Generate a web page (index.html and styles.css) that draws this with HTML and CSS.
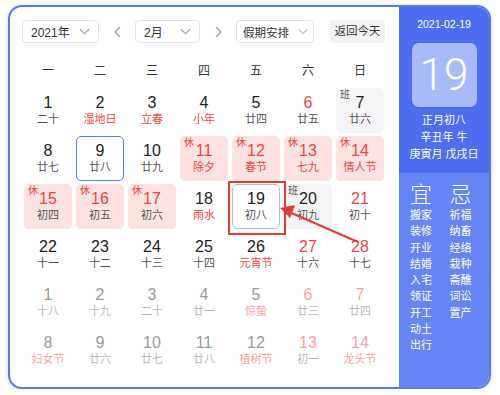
FILE: index.html
```html
<!DOCTYPE html>
<html lang="zh-CN">
<head>
<meta charset="utf-8">
<title>万年历</title>
<link rel="stylesheet" href="styles.css">
</head>
<body>
<div class="card">
  <div class="cal">
    <div class="toolbar">
      <div class="select sel-year"><span>2021年</span><svg class="chev" viewBox="0 0 12 7"><polyline points="1,1 6,6 11,1"/></svg></div>
      <div class="nav"><svg viewBox="0 0 7 12"><polyline points="6,1 1,6 6,11"/></svg></div>
      <div class="select sel-month"><span>2月</span><svg class="chev" viewBox="0 0 12 7"><polyline points="1,1 6,6 11,1"/></svg></div>
      <div class="nav"><svg viewBox="0 0 7 12"><polyline points="1,1 6,6 1,11"/></svg></div>
      <div class="select sel-holiday"><span>假期安排</span><svg class="chev" viewBox="0 0 12 7"><polyline points="1,1 6,6 11,1"/></svg></div>
      <div class="today-btn">返回今天</div>
    </div>
    <div class="weekdays">
      <span>一</span><span>二</span><span>三</span><span>四</span><span>五</span><span>六</span><span>日</span>
    </div>
    <div class="grid">
      <div class="cell"><div class="num">1</div><div class="lunar">二十</div></div>
      <div class="cell"><div class="num">2</div><div class="lunar red">湿地日</div></div>
      <div class="cell"><div class="num">3</div><div class="lunar red">立春</div></div>
      <div class="cell"><div class="num">4</div><div class="lunar red">小年</div></div>
      <div class="cell"><div class="num">5</div><div class="lunar">廿四</div></div>
      <div class="cell"><div class="num red">6</div><div class="lunar">廿五</div></div>
      <div class="cell work"><span class="tag">班</span><div class="num">7</div><div class="lunar">廿六</div></div>

      <div class="cell"><div class="num">8</div><div class="lunar">廿七</div></div>
      <div class="cell today"><div class="num">9</div><div class="lunar">廿八</div></div>
      <div class="cell"><div class="num">10</div><div class="lunar">廿九</div></div>
      <div class="cell rest"><span class="tag">休</span><div class="num red">11</div><div class="lunar red">除夕</div></div>
      <div class="cell rest"><span class="tag">休</span><div class="num red">12</div><div class="lunar red">春节</div></div>
      <div class="cell rest"><span class="tag">休</span><div class="num red">13</div><div class="lunar red">七九</div></div>
      <div class="cell rest"><span class="tag">休</span><div class="num red">14</div><div class="lunar red">情人节</div></div>

      <div class="cell rest"><span class="tag">休</span><div class="num red">15</div><div class="lunar">初四</div></div>
      <div class="cell rest"><span class="tag">休</span><div class="num red">16</div><div class="lunar">初五</div></div>
      <div class="cell rest"><span class="tag">休</span><div class="num red">17</div><div class="lunar">初六</div></div>
      <div class="cell"><div class="num">18</div><div class="lunar red">雨水</div></div>
      <div class="cell selected"><div class="num">19</div><div class="lunar">初八</div></div>
      <div class="cell work"><span class="tag">班</span><div class="num">20</div><div class="lunar">初九</div></div>
      <div class="cell"><div class="num red">21</div><div class="lunar">初十</div></div>

      <div class="cell"><div class="num">22</div><div class="lunar">十一</div></div>
      <div class="cell"><div class="num">23</div><div class="lunar">十二</div></div>
      <div class="cell"><div class="num">24</div><div class="lunar">十三</div></div>
      <div class="cell"><div class="num">25</div><div class="lunar">十四</div></div>
      <div class="cell"><div class="num">26</div><div class="lunar red">元宵节</div></div>
      <div class="cell"><div class="num red">27</div><div class="lunar">十六</div></div>
      <div class="cell"><div class="num red">28</div><div class="lunar">十七</div></div>

      <div class="cell other"><div class="num">1</div><div class="lunar">十八</div></div>
      <div class="cell other"><div class="num">2</div><div class="lunar">十九</div></div>
      <div class="cell other"><div class="num">3</div><div class="lunar">二十</div></div>
      <div class="cell other"><div class="num">4</div><div class="lunar">廿一</div></div>
      <div class="cell other"><div class="num">5</div><div class="lunar red">惊蛰</div></div>
      <div class="cell other"><div class="num red">6</div><div class="lunar">廿三</div></div>
      <div class="cell other"><div class="num red">7</div><div class="lunar">廿四</div></div>

      <div class="cell other"><div class="num">8</div><div class="lunar red">妇女节</div></div>
      <div class="cell other"><div class="num">9</div><div class="lunar">廿六</div></div>
      <div class="cell other"><div class="num">10</div><div class="lunar">廿七</div></div>
      <div class="cell other"><div class="num">11</div><div class="lunar">廿八</div></div>
      <div class="cell other"><div class="num">12</div><div class="lunar red">植树节</div></div>
      <div class="cell other"><div class="num red">13</div><div class="lunar">初一</div></div>
      <div class="cell other"><div class="num red">14</div><div class="lunar red">龙头节</div></div>
    </div>
  </div>

  <div class="side">
    <div class="side-top">
      <div class="side-date">2021-02-19</div>
      <div class="big-day">19</div>
      <div class="side-line">正月初八</div>
      <div class="side-line">辛丑年 牛</div>
      <div class="side-line">庚寅月 戊戌日</div>
    </div>
    <div class="side-bottom">
      <div class="yiji">
        <div class="yiji-title">宜</div>
        <div class="yiji-item">搬家</div>
        <div class="yiji-item">装修</div>
        <div class="yiji-item">开业</div>
        <div class="yiji-item">结婚</div>
        <div class="yiji-item">入宅</div>
        <div class="yiji-item">领证</div>
        <div class="yiji-item">开工</div>
        <div class="yiji-item">动土</div>
        <div class="yiji-item">出行</div>
      </div>
      <div class="yiji">
        <div class="yiji-title">忌</div>
        <div class="yiji-item">祈福</div>
        <div class="yiji-item">纳畜</div>
        <div class="yiji-item">经络</div>
        <div class="yiji-item">栽种</div>
        <div class="yiji-item">斋醮</div>
        <div class="yiji-item">词讼</div>
        <div class="yiji-item">置产</div>
      </div>
    </div>
  </div>

  <div class="mark"></div>
  <svg class="arrow" viewBox="0 0 479 380" width="479" height="380">
    <line x1="348" y1="235" x2="277" y2="204"/>
    <polygon points="270,201 285,198 280,211"/>
  </svg>
</div>
</body>
</html>
```

FILE: styles.css
```css
* { box-sizing: border-box; }

body {
  margin: 0;
  background: #ffffff;
  font-family: "Liberation Sans", "Noto Sans CJK SC", sans-serif;
  color: #222;
}

.card {
  position: relative;
  margin: 5px 0 0 8px;
  width: 483px;
  height: 384px;
  border: 2px solid #5b79ef;
  border-radius: 14px;
  overflow: hidden;
  display: flex;
  background: #fff;
  box-shadow: 0 1px 4px rgba(80, 100, 200, 0.25);
}

.cal {
  width: 389px;
  padding: 13px 0 0 12px;
}

.toolbar {
  display: flex;
  align-items: center;
  height: 23px;
  font-size: 12px;
  color: #333;
}

.select {
  height: 23px;
  border: 1px solid #e4e4e4;
  border-radius: 4px;
  display: flex;
  align-items: center;
  justify-content: space-between;
  padding: 0 8px 0 8px;
}

.sel-year { width: 77px; }
.sel-month { width: 65px; }
.sel-holiday { width: 78px; padding: 0 5px 0 6px; }
.sel-holiday span { font-size: 11.5px; }
.sel-holiday .chev { width: 10px; }

.chev {
  width: 11px;
  height: 7px;
  fill: none;
  stroke: #999;
  stroke-width: 1.2;
}

.nav {
  width: 36px;
  display: flex;
  justify-content: center;
}

.nav svg {
  width: 7px;
  height: 12px;
  fill: none;
  stroke: #999;
  stroke-width: 1.3;
}

.today-btn {
  margin-left: 16px;
  width: 55px;
  height: 23px;
  line-height: 23px;
  text-align: center;
  background: #f3f3f3;
  border-radius: 4px;
  font-size: 11.5px;
  color: #333;
}

.weekdays {
  display: grid;
  grid-template-columns: repeat(7, 48px);
  column-gap: 4px;
  margin-left: 2px;
  padding-top: 18px;
  height: 45px;
  font-size: 12px;
  line-height: 20px;
  color: #333;
  text-align: center;
}

.grid {
  display: grid;
  grid-template-columns: repeat(7, 48px);
  grid-auto-rows: 45px;
  column-gap: 4px;
  row-gap: 3px;
  margin-left: 2px;
}

.cell {
  position: relative;
  border-radius: 5px;
  text-align: center;
  padding-top: 6px;
}

.num {
  font-size: 16px;
  line-height: 18px;
  color: #222;
}

.lunar {
  font-size: 11px;
  line-height: 15px;
  color: #555;
}

.num.red { color: #ef4444; }
.lunar.red { color: #ef4444; }

.rest { background: #fde2e2; }
.work { background: #f4f4f6; }

.tag {
  position: absolute;
  top: 1px;
  left: 4px;
  font-size: 10px;
  line-height: 12px;
  color: #ef4444;
}

.work .tag { color: #555; }

.today {
  border: 1.5px solid #5b79ef;
  padding-top: 4.5px;
}

.selected {
  border: 1.5px solid #bdbdbd;
  padding-top: 4.5px;
}

.other .num { color: #9a9a9a; }
.other .lunar { color: #b8b8b8; }
.other .num.red, .other .lunar.red { color: #f5a3a3; }

.side {
  width: 90px;
  display: flex;
  flex-direction: column;
  color: #fff;
}

.side-top {
  background: #4e6ef2;
  padding: 10px 0 10px 0;
  display: flex;
  flex-direction: column;
  align-items: center;
}

.side-date {
  font-size: 10.5px;
  line-height: 14px;
}

.big-day {
  margin-top: 12px;
  margin-bottom: 5px;
  width: 65px;
  height: 64px;
  border-radius: 7px;
  background: #a9baf9;
  font-family: Roboto, "Liberation Sans", sans-serif;
  font-weight: 300;
  font-size: 44px;
  line-height: 64px;
  text-align: center;
  color: #fff;
}

.side-line {
  font-size: 11px;
  line-height: 17px;
}

.side-bottom {
  flex: 1;
  background: #6585f5;
  display: flex;
  padding: 10px 0 0 11px;
}

.yiji {
  width: 47px;
}

.yiji-title {
  font-size: 22px;
  line-height: 24px;
  font-weight: 300;
}

.yiji-item {
  font-size: 11px;
  line-height: 16.3px;
}

.mark {
  position: absolute;
  left: 218px;
  top: 174px;
  width: 58px;
  height: 54px;
  border: 2px solid #e53935;
}

.arrow {
  position: absolute;
  left: 0;
  top: 0;
  pointer-events: none;
}

.arrow line {
  stroke: #e53935;
  stroke-width: 2;
}

.arrow polygon {
  fill: #e53935;
}
```
